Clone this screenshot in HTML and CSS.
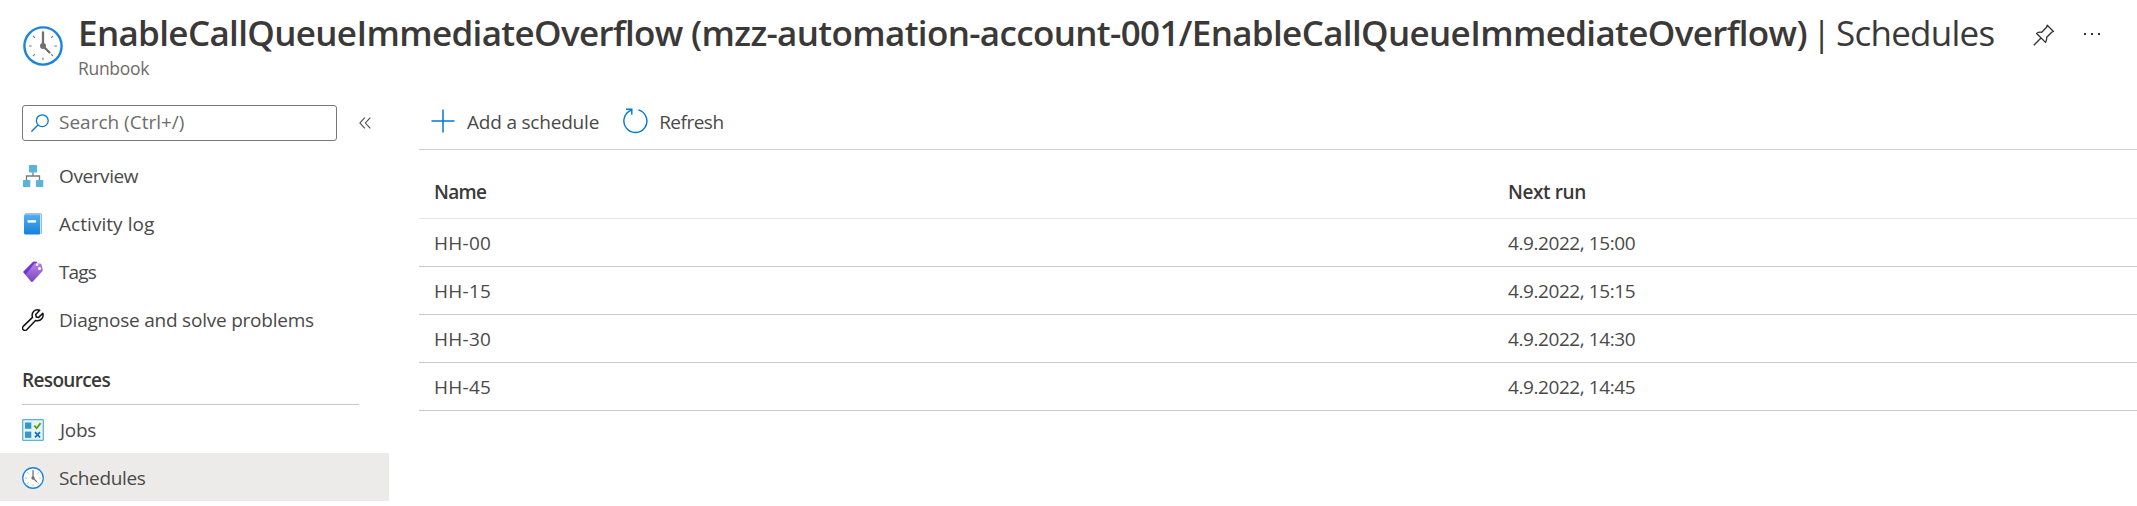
FILE: index.html
```
<!DOCTYPE html>
<html lang="en">
<head>
<meta charset="utf-8">
<title>EnableCallQueueImmediateOverflow | Schedules</title>
<link rel="stylesheet" href="styles.css">
</head>
<body>
<svg class="defs" aria-hidden="true">
  <symbol id="clock" viewBox="0 0 40 40">
    <circle cx="20" cy="20" r="18.6" fill="#fff" stroke="#1b84dd" stroke-width="2.4"/>
    <path d="M6 20h2.8M31.2 20H34M20 31.5V34M10 10l1.9 1.9M30 10l-1.9 1.9M10 30l1.9-1.9M30 30l-1.9-1.9" stroke="#808080" stroke-width="1.2"/>
    <path d="M20 6.5V20l6.5 6.5" fill="none" stroke="#707070" stroke-width="2.3" stroke-linecap="round"/>
    <circle cx="20" cy="20" r="3" fill="#707070"/>
  </symbol>
</svg>
<header class="header">
  <svg class="header-icon"><use href="#clock"/></svg>
  <div class="header-text">
    <h1 class="title"><span class="title-name">EnableCallQueueImmediateOverflow (mzz-automation-account-001/EnableCallQueueImmediateOverflow)</span><span class="title-bar">|</span><span class="title-page">Schedules</span></h1>
    <div class="subtitle">Runbook</div>
  </div>
  <div class="header-actions">
    <svg class="pin" viewBox="0 0 22 22" fill="none" stroke="#323130" stroke-width="1.3" stroke-linejoin="round"><path d="M14.2 1.2l6.3 6.3-1.8.7-5 5c.2 2.100-.2 3.700-1.200 5.200L3.600 9.500c1.400-1.100 3-1.500 5.100-1.200l4.900-5.100zM8 14L.800 21.200"/></svg>
    <svg class="more" viewBox="0 0 18 4" fill="#323130"><path d="M1 1h2v2H1zM8 1h2v2H8zM15 1h2v2h-2z"/></svg>
  </div>
</header>
<div class="layout">
  <aside class="sidebar">
    <div class="search-row">
      <div class="search">
        <svg class="search-icon" viewBox="0 0 18 18" fill="none" stroke="#0078d4" stroke-width="1.3"><circle cx="11.300" cy="6.700" r="5.900"/><path d="M7 11L.400 17.600"/></svg>
        <span class="search-label">Search (Ctrl+/)</span>
      </div>
      <svg class="collapse" viewBox="0 0 12 12" fill="none" stroke="#484644" stroke-width="1.1"><path d="M5.800.600L.900 6l4.900 5.400M11.300.600L6.400 6l4.900 5.400"/></svg>
    </div>
    <nav class="nav">
      <a class="nav-item">
        <svg class="nav-icon" viewBox="0 0 22 22"><path d="M11 7v4M4.500 15v-4h13v4" fill="none" stroke="#7a7a7a" stroke-width="1.300"/><g fill="#59b4d9"><rect x="7" width="8" height="7.500" rx=".6"/><rect x="1" y="15" width="7.300" height="7" rx=".6"/><rect x="14" y="15" width="7.300" height="7" rx=".6"/></g></svg>
        <span class="overview">Overview</span>
      </a>
      <a class="nav-item">
        <svg class="nav-icon" viewBox="0 0 22 22"><defs><linearGradient id="book" x2="0" y2="1"><stop stop-color="#50adf0"/><stop offset="1" stop-color="#1481dc"/></linearGradient></defs><rect x="2.500" y=".2" width="17.500" height="20.600" rx="1.500" fill="#7aaed8"/><path d="M3.500 1.600h14.700V20h1V1.200H4z" fill="#e6f1fa"/><path d="M2 2.200h15.200q.8 0 .8.800v17.800q0 .8-.8.800H3.500Q2 21.600 2 20.100z" fill="url(#book)"/><rect x="5.600" y="7.200" width="8.500" height="2.400" fill="#fff"/></svg>
        <span class="activity">Activity log</span>
      </a>
      <a class="nav-item">
        <svg class="nav-icon" viewBox="0 0 22 22"><defs><linearGradient id="tag" x2="0" y2="1"><stop stop-color="#b985e8"/><stop offset="1" stop-color="#7746b8"/></linearGradient></defs><path d="M1.400 10.400L10.600 1.200q.8-.8 1.900-.7l3 .4L4.200 14.400 1.600 11.800q-.7-.7-.2-1.400z" fill="#6f35d8"/><path d="M12.500 2.200l5.800.200q1.200.100 1.500 1.300l.9 5q.100 1-.600 1.800l-9.500 10.200q-.7.700-1.400 0L3.500 14z" fill="url(#tag)"/><circle cx="15" cy="3.800" r="1.200" fill="#fff"/><circle cx="17.500" cy="7.600" r="1.500" fill="#fff"/></svg>
        <span class="tags">Tags</span>
      </a>
      <a class="nav-item">
        <svg class="nav-icon" viewBox="0 0 22 22" fill="none" stroke="#111" stroke-width="1.500" stroke-linejoin="round"><path d="M17.700 1.300l-4 4.100.5 2.500 2.500.5 4.100-4.100c1.200 3.700-1.500 7.700-6 7.400l-1.300-.2-8.800 9.200c-2.500 2.200-5.500-.8-3.500-3.300l9.300-9C9 3.500 13-.500 17.700 1.300z"/></svg>
        <span class="diagnose">Diagnose and solve problems</span>
      </a>
    </nav>
    <h2 class="group">Resources</h2>
    <nav class="nav">
      <a class="nav-item lower">
        <svg class="nav-icon" viewBox="0 0 22 22"><rect x=".700" y=".700" width="20.600" height="20.600" rx=".5" fill="#e5f4fa" stroke="#59b4d9" stroke-width="1.300"/><g fill="#3698c8"><rect x="3" y="3.500" width="6.300" height="6.300"/><rect x="3" y="12.600" width="6.300" height="6.300"/></g><path d="M12.300 6.600l2.300 2.500 4-5" fill="none" stroke="#57a300" stroke-width="1.700"/><path d="M13 13.200l5 5.200M18 13.200l-5 5.200" stroke="#0f6fc6" stroke-width="1.700"/></svg>
        <span class="jobs">Jobs</span>
      </a>
      <a class="nav-item lower selected">
        <svg class="nav-icon"><use href="#clock"/></svg>
        <span class="schedules">Schedules</span>
      </a>
    </nav>
  </aside>
  <main class="content">
    <div class="toolbar">
      <button class="command">
        <svg class="add-icon" viewBox="0 0 24 24" stroke="#0078d4" stroke-width="1.500"><path d="M12 .500v23M.500 12h23"/></svg>
        <span class="add-label">Add a schedule</span>
      </button>
      <button class="command">
        <svg class="refresh-icon" viewBox="0 0 26 26" fill="none" stroke="#0078d4" stroke-width="1.400"><path d="M16.300 1.900A11.500 11.500 0 1 1 9.500 2.200M4 1.200h5.800v5.600"/></svg>
        <span class="refresh-label">Refresh</span>
      </button>
    </div>
    <div class="table">
      <div class="row head"><span class="name-head">Name</span><span class="next-head">Next run</span></div>
      <div class="row"><span class="name">HH-00</span><span class="next">4.9.2022, 15:00</span></div>
      <div class="row"><span class="name">HH-15</span><span class="next">4.9.2022, 15:15</span></div>
      <div class="row"><span class="name">HH-30</span><span class="next">4.9.2022, 14:30</span></div>
      <div class="row"><span class="name">HH-45</span><span class="next">4.9.2022, 14:45</span></div>
    </div>
  </main>
</div>
</body>
</html>
```
FILE: styles.css
```
* { box-sizing: border-box; }
body {
  margin: 0;
  height: 506px;
  overflow: hidden;
  background: #fff;
  color: #4a4948;
  font: 19px/26px "Open Sans", "Noto Sans", sans-serif;
  white-space: nowrap;
}
svg { display: block; flex: none; }
.defs { width: 0; height: 0; position: absolute; }

.header { display: flex; height: 105px; padding-left: 23px; }
.header-icon { width: 40px; height: 40px; margin-top: 26px; }
.header-text { width: 1935px; padding: 9px 0 0 15px; }
.title {
  display: flex;
  margin: 0;
  font-size: 35px;
  line-height: 48px;
  font-weight: 400;
  color: #3a3938;
}
.title-name { width: 1734px; font-weight: 600; letter-spacing: -0.65px; }
.title-bar { width: 24px; }
.title-page { letter-spacing: -0.75px; }
.subtitle { margin-top: -1px; font-size: 17.5px; line-height: 24px; letter-spacing: -0.3px; color: #6e6c6a; }
.header-actions { display: flex; gap: 28px; padding-top: 24px; margin-left: 35px; }
.pin { width: 22px; height: 22px; }
.more { width: 18px; height: 4px; margin-top: 8px; }

.layout { display: flex; }
.sidebar { width: 389px; flex: none; }
.search-row { display: flex; align-items: center; height: 36px; padding-left: 22px; margin-bottom: 11px; }
.search {
  display: flex;
  align-items: center;
  width: 315px;
  height: 36px;
  padding-left: 8px;
  border: 1px solid #7a7876;
  border-radius: 3px;
}
.search-icon { width: 18px; height: 18px; }
.search-label { margin: -2px 0 0 10px; color: #6e6c6a; letter-spacing: 0; }
.collapse { width: 12px; height: 12px; margin-left: 22px; }
.nav-item { display: flex; align-items: center; height: 48px; padding-left: 22px; }
.nav-icon { width: 22px; height: 22px; margin-right: 15px; }
.lower { padding-top: 1px; }
.selected { background: #edebe9; }
.overview { letter-spacing: -0.4px; }
.activity { letter-spacing: 0.05px; }
.tags { letter-spacing: -0.9px; }
.diagnose { letter-spacing: -0.22px; }
.jobs { letter-spacing: -0.3px; padding-left: 1px; }
.schedules { letter-spacing: -0.36px; }
.group {
  width: 337px;
  height: 61px;
  margin: 0 0 0 22px;
  padding-top: 23px;
  border-bottom: 1px solid #c8c6c4;
  font-size: 19px;
  line-height: 26px;
  font-weight: 600;
  letter-spacing: -0.65px;
  color: #3a3938;
}

.content { flex: 1; padding-left: 30px; }
.toolbar { display: flex; gap: 23px; height: 45px; padding-left: 12px; border-bottom: 1px solid #d2d0ce; }
.command {
  display: flex;
  align-items: center;
  height: 33px;
  padding: 0;
  border: 0;
  background: none;
  color: inherit;
  font: inherit;
}
.add-icon { width: 24px; height: 24px; margin: -1px 12px 0 0; }
.refresh-icon { width: 26px; height: 26px; margin: -2px 11px 0 0; }
.add-label { letter-spacing: -0.2px; }
.refresh-label { letter-spacing: -0.5px; }
.table { padding-top: 20px; }
.row {
  display: grid;
  grid-template-columns: 1074px 1fr;
  align-items: center;
  height: 48px;
  padding-left: 15px;
  border-bottom: 1px solid #c8c8c8;
}
.head { height: 49px; align-items: start; padding-top: 9px; border-bottom-color: #e4e4e4; font-weight: 600; color: #3a3938; }
.name-head { letter-spacing: -0.7px; }
.next-head { letter-spacing: -0.39px; }
.name { letter-spacing: 0.25px; }
.next { letter-spacing: -0.42px; }
```
